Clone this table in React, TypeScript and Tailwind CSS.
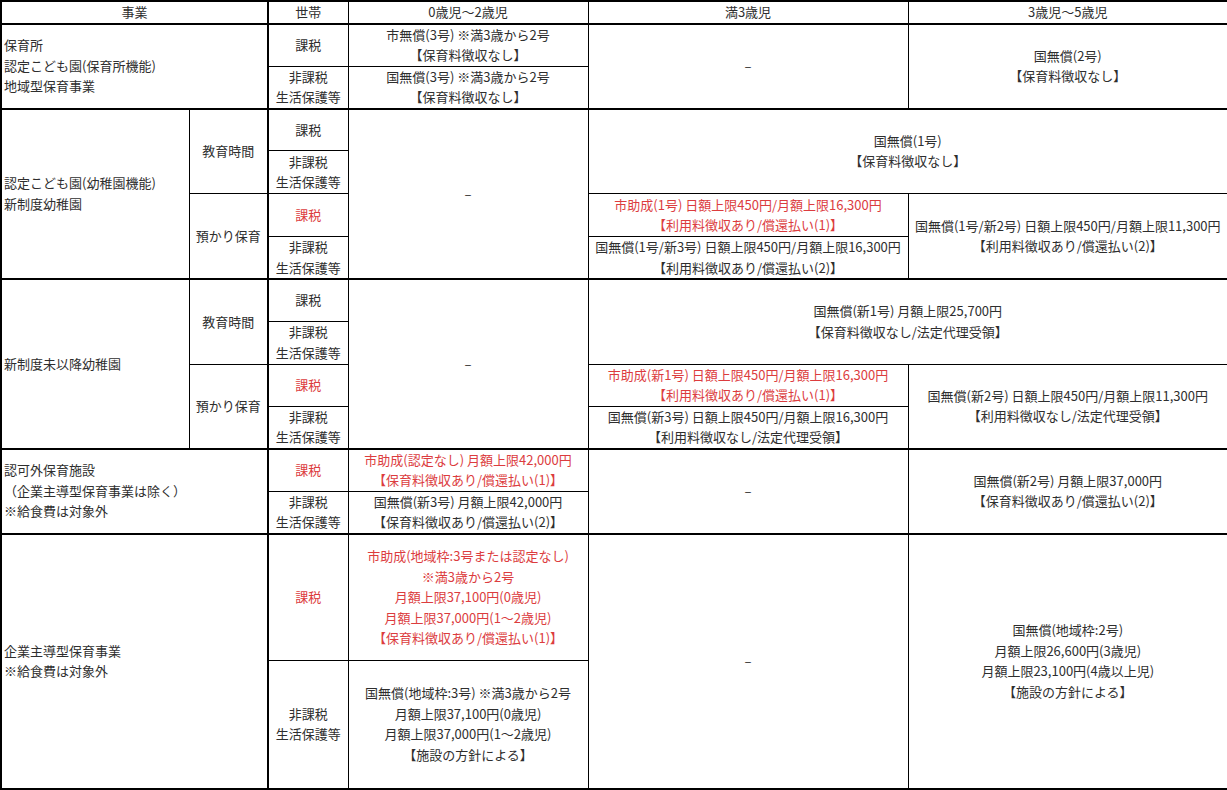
import React from 'react';
import clsx from 'clsx';

type CellProps = {
    lines: string[];
    rs?: number;
    cs?: number;
    left?: boolean;
    red?: boolean;
    top?: boolean;
    thickLeft?: boolean;
};

const Cell: React.FC<CellProps> = ({ lines, rs, cs, left, red, top, thickLeft }) => (
    <td
        rowSpan={rs}
        colSpan={cs}
        className={clsx(
            'border border-black align-middle p-0 whitespace-nowrap',
            left ? 'text-left pl-[2px]' : 'text-center',
            red ? 'text-[#dc3c3e]' : 'text-[#2e2e2e]',
            top && 'border-t-2',
            thickLeft && 'border-l-2'
        )}
    >
        {lines.map((l, i) => (
            <div key={i}>{l}</div>
        ))}
    </td>
);

const TAX = ['課税'];
const NONTAX = ['非課税', '生活保護等'];
const DASH = ['–'];

const App: React.FC = () => {
    return (
        <div className="w-[1227px] h-[790px] bg-white overflow-hidden">
            <table
                className="w-[1227px] table-fixed border-collapse border-2 border-black text-[13px] leading-[20.5px]"
                style={{ fontFamily: '"Noto Sans CJK JP", "Noto Sans", sans-serif' }}
            >
                <colgroup>
                    <col className="w-[188px]" />
                    <col className="w-[79px]" />
                    <col className="w-[80px]" />
                    <col className="w-[240px]" />
                    <col className="w-[320px]" />
                    <col className="w-[320px]" />
                </colgroup>
                <tbody>
                    {/* header */}
                    <tr className="h-[22px]">
                        <td colSpan={2} className="border border-black border-b-2 text-center text-[#2e2e2e] p-0">事業</td>
                        <td className="border border-black border-b-2 border-l-2 text-center text-[#2e2e2e] p-0">世帯</td>
                        <td className="border border-black border-b-2 text-center text-[#2e2e2e] p-0">0歳児〜2歳児</td>
                        <td className="border border-black border-b-2 text-center text-[#2e2e2e] p-0">満3歳児</td>
                        <td className="border border-black border-b-2 text-center text-[#2e2e2e] p-0">3歳児〜5歳児</td>
                    </tr>

                    {/* 保育所 */}
                    <tr className="h-[42px]">
                        <Cell cs={2} rs={2} left top lines={['保育所', '認定こども園(保育所機能)', '地域型保育事業']} />
                        <Cell top thickLeft lines={TAX} />
                        <Cell top lines={['市無償(3号) ※満3歳から2号', '【保育料徴収なし】']} />
                        <Cell rs={2} top lines={DASH} />
                        <Cell rs={2} top lines={['国無償(2号)', '【保育料徴収なし】']} />
                    </tr>
                    <tr className="h-[42px]">
                        <Cell thickLeft lines={NONTAX} />
                        <Cell lines={['国無償(3号) ※満3歳から2号', '【保育料徴収なし】']} />
                    </tr>

                    {/* 認定こども園(幼稚園機能) */}
                    <tr className="h-[42px]">
                        <Cell rs={4} left top lines={['認定こども園(幼稚園機能)', '新制度幼稚園']} />
                        <Cell rs={2} top lines={['教育時間']} />
                        <Cell top thickLeft lines={TAX} />
                        <Cell rs={4} top lines={DASH} />
                        <Cell cs={2} rs={2} top lines={['国無償(1号)', '【保育料徴収なし】']} />
                    </tr>
                    <tr className="h-[43px]">
                        <Cell thickLeft lines={NONTAX} />
                    </tr>
                    <tr className="h-[43px]">
                        <Cell rs={2} lines={['預かり保育']} />
                        <Cell thickLeft red lines={TAX} />
                        <Cell red lines={['市助成(1号) 日額上限450円/月額上限16,300円', '【利用料徴収あり/償還払い(1)】']} />
                        <Cell rs={2} lines={['国無償(1号/新2号) 日額上限450円/月額上限11,300円', '【利用料徴収あり/償還払い(2)】']} />
                    </tr>
                    <tr className="h-[42px]">
                        <Cell thickLeft lines={NONTAX} />
                        <Cell lines={['国無償(1号/新3号) 日額上限450円/月額上限16,300円', '【利用料徴収あり/償還払い(2)】']} />
                    </tr>

                    {/* 新制度未以降幼稚園 */}
                    <tr className="h-[42px]">
                        <Cell rs={4} left top lines={['新制度未以降幼稚園']} />
                        <Cell rs={2} top lines={['教育時間']} />
                        <Cell top thickLeft lines={TAX} />
                        <Cell rs={4} top lines={DASH} />
                        <Cell cs={2} rs={2} top lines={['国無償(新1号) 月額上限25,700円', '【保育料徴収なし/法定代理受領】']} />
                    </tr>
                    <tr className="h-[43px]">
                        <Cell thickLeft lines={NONTAX} />
                    </tr>
                    <tr className="h-[42px]">
                        <Cell rs={2} lines={['預かり保育']} />
                        <Cell thickLeft red lines={TAX} />
                        <Cell red lines={['市助成(新1号) 日額上限450円/月額上限16,300円', '【利用料徴収あり/償還払い(1)】']} />
                        <Cell rs={2} lines={['国無償(新2号) 日額上限450円/月額上限11,300円', '【利用料徴収なし/法定代理受領】']} />
                    </tr>
                    <tr className="h-[42px]">
                        <Cell thickLeft lines={NONTAX} />
                        <Cell lines={['国無償(新3号) 日額上限450円/月額上限16,300円', '【利用料徴収なし/法定代理受領】']} />
                    </tr>

                    {/* 認可外保育施設 */}
                    <tr className="h-[42px]">
                        <Cell cs={2} rs={2} left top lines={['認可外保育施設', '（企業主導型保育事業は除く）', '※給食費は対象外']} />
                        <Cell top thickLeft red lines={TAX} />
                        <Cell top red lines={['市助成(認定なし) 月額上限42,000円', '【保育料徴収あり/償還払い(1)】']} />
                        <Cell rs={2} top lines={DASH} />
                        <Cell rs={2} top lines={['国無償(新2号) 月額上限37,000円', '【保育料徴収あり/償還払い(2)】']} />
                    </tr>
                    <tr className="h-[42px]">
                        <Cell thickLeft lines={NONTAX} />
                        <Cell lines={['国無償(新3号) 月額上限42,000円', '【保育料徴収あり/償還払い(2)】']} />
                    </tr>

                    {/* 企業主導型保育事業 */}
                    <tr className="h-[127px]">
                        <Cell cs={2} rs={2} left top lines={['企業主導型保育事業', '※給食費は対象外']} />
                        <Cell top thickLeft red lines={TAX} />
                        <Cell
                            top
                            red
                            lines={[
                                '市助成(地域枠:3号または認定なし)',
                                '※満3歳から2号',
                                '月額上限37,100円(0歳児)',
                                '月額上限37,000円(1〜2歳児)',
                                '【保育料徴収あり/償還払い(1)】',
                            ]}
                        />
                        <Cell rs={2} top lines={DASH} />
                        <Cell
                            rs={2}
                            top
                            lines={['国無償(地域枠:2号)', '月額上限26,600円(3歳児)', '月額上限23,100円(4歳以上児)', '【施設の方針による】']}
                        />
                    </tr>
                    <tr className="h-[128px]">
                        <Cell thickLeft lines={NONTAX} />
                        <Cell
                            lines={['国無償(地域枠:3号) ※満3歳から2号', '月額上限37,100円(0歳児)', '月額上限37,000円(1〜2歳児)', '【施設の方針による】']}
                        />
                    </tr>
                </tbody>
            </table>
        </div>
    );
};

export default App;
